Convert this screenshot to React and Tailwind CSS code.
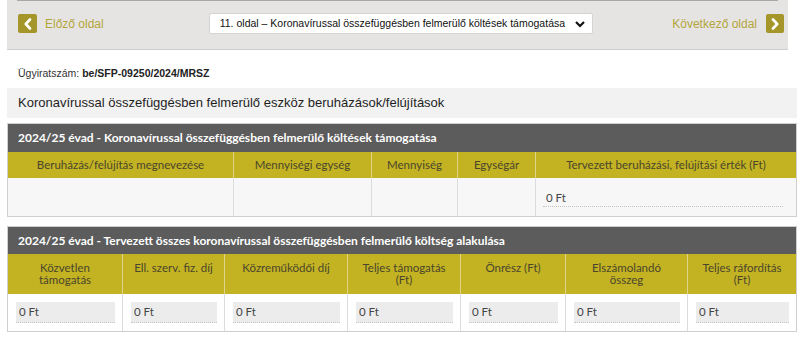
import React from "react";

const arial = { fontFamily: '"Liberation Sans", Arial, sans-serif' };

function Field({ value }) {
  return (
    <div className="h-[21px] bg-[#ececec] border-b border-dotted border-[#c8c8c8] flex items-center px-[3px] text-[11.5px] text-[#444]">
      {value}
    </div>
  );
}

export default function App() {
  const t1cols = "grid-cols-[225px_138px_86px_78px_1fr]";
  const t2cols = "grid-cols-[114px_102px_123px_113px_105px_122px_1fr]";
  const h1 = ["Beruházás/felújítás megnevezése", "Mennyiségi egység", "Mennyiség", "Egységár", "Tervezett beruházási, felújítási érték (Ft)"];
  const h2 = [["Közvetlen", "támogatás"], ["Ell. szerv. fiz. díj"], ["Közreműködői díj"], ["Teljes támogatás", "(Ft)"], ["Önrész (Ft)"], ["Elszámolandó", "összeg"], ["Teljes ráfordítás", "(Ft)"]];
  return (
    <div className="w-[800px] h-[344px] bg-white overflow-hidden" style={{ fontFamily: 'Lato, "Liberation Sans", sans-serif' }}>
      {/* top nav */}
      <div className="ml-[7px] w-[781px] h-[50px] bg-[#e6e4e2] border-b border-[#cfcdcb] flex flex-col">
        <div className="mx-[10px] h-px bg-[#a8a8a8]" />
        <div className="flex-1 flex items-center pl-[11px] pr-[4px] pb-[3px]" style={arial}>
          <div className="w-[19px] h-[19px] bg-[#a5962a] rounded-[2px] flex items-center justify-center">
            <svg width="10" height="12" viewBox="0 0 10 12"><path d="M7 1.5 L2.8 6 L7 10.5" stroke="white" strokeWidth="2.6" fill="none" strokeLinecap="round" strokeLinejoin="round" /></svg>
          </div>
          <span className="ml-[8px] text-[12px] text-[#b3a43c]">Előző oldal</span>
          <div className="ml-[105px] w-[384px] h-[21px] bg-white border border-[#d4d4d4] rounded-[2px] flex items-center pl-[10px] pr-[6px]">
            <span className="text-[10.5px] text-[#111] whitespace-nowrap overflow-hidden flex-1">11. oldal – Koronavírussal összefüggésben felmerülő költések támogatása</span>
            <svg width="12" height="10" viewBox="0 0 12 10" className="ml-[4px]"><path d="M2 3 L6 7 L10 3" stroke="#111" strokeWidth="2.2" fill="none" /></svg>
          </div>
          <span className="ml-auto text-[12px] text-[#b3a43c]">Következő oldal</span>
          <div className="ml-[9px] w-[18px] h-[19px] bg-[#a5962a] rounded-[2px] flex items-center justify-center">
            <svg width="10" height="12" viewBox="0 0 10 12"><path d="M3 1.5 L7.2 6 L3 10.5" stroke="white" strokeWidth="2.6" fill="none" strokeLinecap="round" strokeLinejoin="round" /></svg>
          </div>
        </div>
      </div>

      <div className="pl-[18px] pt-[16px] h-[38px] text-[10.5px] text-[#333]" style={arial}>
        Ügyiratszám: <span className="font-bold text-[#222]">be/SFP-09250/2024/MRSZ</span>
      </div>

      <div className="ml-[7px] mr-[3px] h-[30px] bg-[#f2f2f2] flex items-center pl-[11px] text-[13px] text-[#1e1e1e]" style={arial}>
        Koronavírussal összefüggésben felmerülő eszköz beruházások/felújítások
      </div>

      {/* table 1 */}
      <div className="ml-[7px] mr-[3px] mt-[5px] border border-[#cfcfcf]">
        <div className="h-[28px] bg-[#5c5c5c] flex items-center pl-[10px] text-[12px] font-bold text-white">
          2024/25 évad - Koronavírussal összefüggésben felmerülő költések támogatása
        </div>
        <div className={`grid ${t1cols} h-[26px] bg-[#c3b323]`}>
          {h1.map((h, i) => (
            <div key={i} className={`flex items-center justify-center text-[11.5px] text-[#4a452c] ${i > 0 ? "border-l border-[#ddd48a]" : ""}`}>{h}</div>
          ))}
        </div>
        <div className={`grid ${t1cols} h-[38px] bg-[#f7f7f7]`}>
          {[0, 1, 2, 3].map((i) => (
            <div key={i} className={i > 0 ? "border-l border-[#dcdcdc]" : ""} />
          ))}
          <div className="border-l border-[#dcdcdc] pl-[7px] pr-[13px] pt-[11px]">
            <div className="h-[18px] border-b border-dotted border-[#c4c4c4] pl-[3px] text-[11.5px] text-[#444]">0 Ft</div>
          </div>
        </div>
      </div>

      {/* table 2 */}
      <div className="ml-[7px] mr-[3px] mt-[9px] border border-[#cfcfcf]">
        <div className="h-[27px] bg-[#5c5c5c] flex items-center pl-[10px] text-[12px] font-bold text-white">
          2024/25 évad - Tervezett összes koronavírussal összefüggésben felmerülő költség alakulása
        </div>
        <div className={`grid ${t2cols} h-[40px] bg-[#c3b323]`}>
          {h2.map((h, i) => (
            <div key={i} className={`flex flex-col items-center text-center pt-[8px] leading-[12px] text-[11.5px] text-[#4a452c] ${i > 0 ? "border-l border-[#ddd48a]" : ""}`}>
              {h.map((l, j) => <span key={j} className="whitespace-nowrap">{l}</span>)}
            </div>
          ))}
        </div>
        <div className={`grid ${t2cols} h-[37px] bg-white`}>
          {h2.map((h, i) => (
            <div key={i} className={`pt-[8px] pl-[8px] pr-[7px] ${i > 0 ? "border-l border-[#dcdcdc]" : ""}`}>
              <Field value="0 Ft" />
            </div>
          ))}
        </div>
      </div>
    </div>
  );
}
